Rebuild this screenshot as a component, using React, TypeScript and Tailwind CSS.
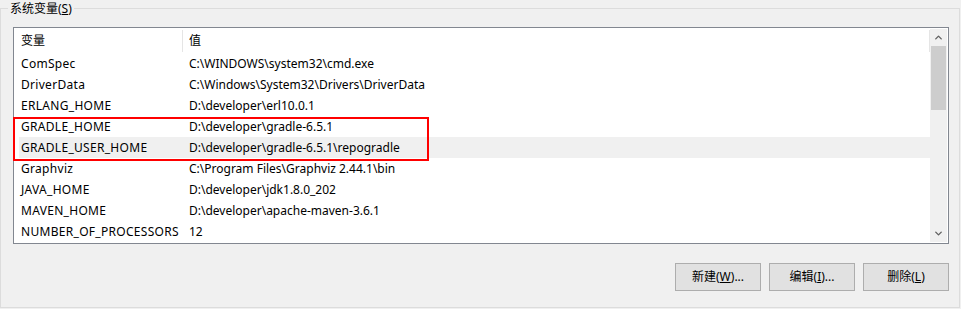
import { ChevronUp, ChevronDown } from 'lucide-react';

const ROWS: [string, string][] = [
    ['ComSpec', 'C:\\WINDOWS\\system32\\cmd.exe'],
    ['DriverData', 'C:\\Windows\\System32\\Drivers\\DriverData'],
    ['ERLANG_HOME', 'D:\\developer\\erl10.0.1'],
    ['GRADLE_HOME', 'D:\\developer\\gradle-6.5.1'],
    ['GRADLE_USER_HOME', 'D:\\developer\\gradle-6.5.1\\repogradle'],
    ['Graphviz', 'C:\\Program Files\\Graphviz 2.44.1\\bin'],
    ['JAVA_HOME', 'D:\\developer\\jdk1.8.0_202'],
    ['MAVEN_HOME', 'D:\\developer\\apache-maven-3.6.1'],
    ['NUMBER_OF_PROCESSORS', '12'],
];

const FONT = "font-['Noto_Sans','Noto_Sans_CJK_SC',sans-serif]";

function Button({ label, mnemonic, dots }: { label: string; mnemonic: string; dots?: boolean }) {
    return (
        <button className="w-[86px] h-[28px] bg-[#e1e1e1] border border-[#adadad] text-[12px] text-black flex items-center justify-center leading-none">
            {label}(<span className="underline">{mnemonic}</span>){dots ? '...' : ''}
        </button>
    );
}

export default function App() {
    return (
        <div className={`relative w-[961px] h-[309px] bg-[#f0f0f0] pt-[8px] overflow-hidden ${FONT}`}>
            {/* group box */}
            <div className="relative w-[960px] h-[300px] border border-[#dcdcdc]">
                <span className="absolute left-[7px] -top-[8px] px-[2px] bg-[#f0f0f0] text-[12px] leading-[15px] text-black">
                    系统变量(<span className="underline">S</span>)
                </span>

                {/* list view */}
                <div className="ml-[12px] mt-[18px] w-[936px] h-[217px] border border-[#828790] bg-white p-[1px] flex">
                    <div className="flex-1 flex flex-col text-[12px] text-black">
                        <div className="h-[24px] flex items-stretch shrink-0">
                            <div className="w-[167px] pl-[6px] flex items-center">变量</div>
                            <div className="w-px bg-[#e5e5e5] my-[1px]" />
                            <div className="flex-1 pl-[6px] flex items-center">值</div>
                            <div className="w-px bg-[#e5e5e5] my-[1px]" />
                        </div>
                        {ROWS.map(([name, value], i) => (
                            <div
                                key={name}
                                className={`ml-[4px] h-[21px] grid grid-cols-[168px_1fr] items-center shrink-0 ${i === 4 ? 'bg-[#f0f0f0]' : ''}`}
                            >
                                <span className="pl-[2px] whitespace-nowrap tracking-[0.3px]">{name}</span>
                                <span className="pl-[2px] whitespace-nowrap">{value}</span>
                            </div>
                        ))}
                    </div>

                    {/* scrollbar */}
                    <div className="w-[17px] bg-[#f0f0f0] flex flex-col">
                        <div className="h-[17px] flex items-center justify-center text-[#606060]">
                            <ChevronUp size={11} strokeWidth={3} />
                        </div>
                        <div className="h-[64px] mx-[1px] bg-[#cdcdcd]" />
                        <div className="flex-1" />
                        <div className="h-[17px] flex items-center justify-center text-[#606060]">
                            <ChevronDown size={11} strokeWidth={3} />
                        </div>
                    </div>
                </div>

                <div className="flex justify-end gap-[8px] mt-[19px] w-[948px]">
                    <Button label="新建" mnemonic="W" dots />
                    <Button label="编辑" mnemonic="I" dots />
                    <Button label="删除" mnemonic="L" />
                </div>
            </div>

            {/* highlight annotation */}
            <div className="absolute left-[13px] top-[117px] w-[416px] h-[44px] border-2 border-[#ff0000]" />
        </div>
    );
}
